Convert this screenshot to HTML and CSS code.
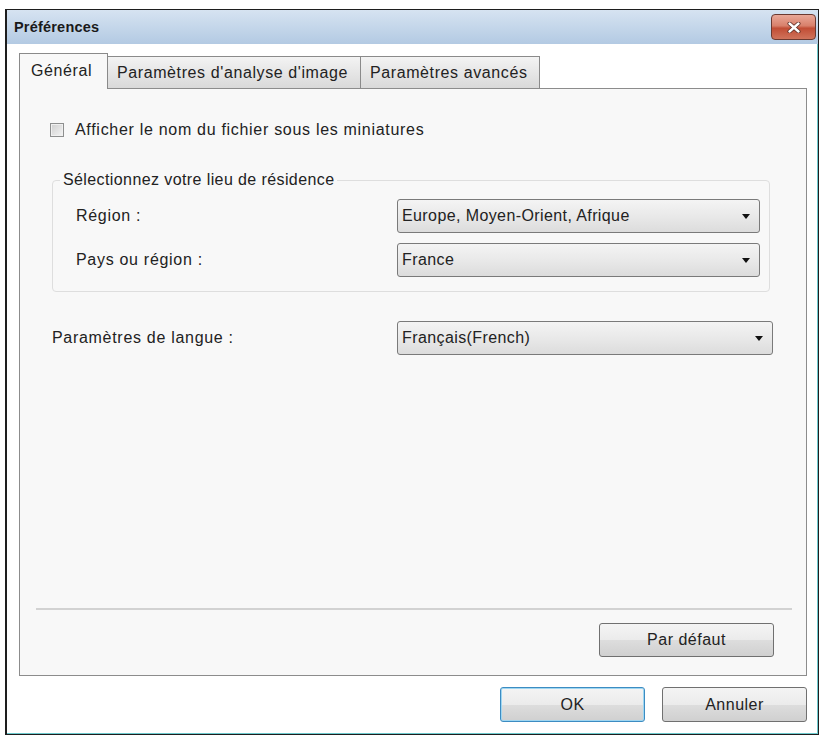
FILE: index.html
```html
<!DOCTYPE html>
<html lang="fr">
<head>
  <meta charset="UTF-8">
  <title>Préférences</title>
  <link rel="stylesheet" href="styles.css">
</head>
<body>
  <div class="window">
    <div class="titlebar">
      <span class="title">Préférences</span>
      <button class="close-btn" title="Fermer">
        <svg width="14" height="11" viewBox="0 0 14 11">
          <path d="M2.5 1.5 L11.5 9.5 M11.5 1.5 L2.5 9.5" stroke="#5a2a22" stroke-width="4" stroke-linecap="round"/>
          <path d="M2.5 1.5 L11.5 9.5 M11.5 1.5 L2.5 9.5" stroke="#fff" stroke-width="2.4" stroke-linecap="round"/>
        </svg>
      </button>
    </div>

    <div class="content">
      <div class="tabs">
        <div class="tab active">Général</div>
        <div class="tab tab-analyse">Paramètres d'analyse d'image</div>
        <div class="tab tab-avances">Paramètres avancés</div>
      </div>

      <div class="panel">
        <div class="panel-body">
          <label class="check-row">
            <span class="checkbox"></span>
            <span>Afficher le nom du fichier sous les miniatures</span>
          </label>

          <fieldset class="group">
            <legend>Sélectionnez votre lieu de résidence</legend>
            <div class="row">
              <span class="label">Région :</span>
              <div class="select">Europe, Moyen-Orient, Afrique<span class="arrow"></span></div>
            </div>
            <div class="row">
              <span class="label">Pays ou région :</span>
              <div class="select">France<span class="arrow"></span></div>
            </div>
          </fieldset>

          <div class="row lang-row">
            <span class="label">Paramètres de langue :</span>
            <div class="select wide">Français(French)<span class="arrow"></span></div>
          </div>
        </div>

        <div class="panel-foot">
          <div class="sep"></div>
          <div class="foot-buttons">
            <button class="btn btn-default">Par défaut</button>
          </div>
        </div>
      </div>

      <div class="dialog-buttons">
        <button class="btn btn-ok">OK</button>
        <button class="btn">Annuler</button>
      </div>
    </div>
  </div>
</body>
</html>
```

FILE: styles.css
```css
body {
  margin: 0;
  padding: 9px 0 0 5px;
  background-color: #fff;
  font-family: "Liberation Sans", Arial, sans-serif;
  font-size: 16px;
  letter-spacing: 0.7px;
  color: #222;
}

.window {
  width: 811px;
  height: 724px;
  border: 1px solid #1e1e1e;
  border-left-width: 2px;
  background-color: #fff;
  box-shadow: inset -1px -1px 0 #6cc9cc;
  display: flex;
  flex-direction: column;
}

.titlebar {
  height: 34px;
  display: flex;
  align-items: center;
  justify-content: space-between;
  padding: 0 2px 0 7px;
  background: linear-gradient(to bottom, #d6e3f1, #b3cae3);
}

.title {
  font-size: 14.5px;
  font-weight: bold;
  letter-spacing: 0.2px;
  color: #1a1a1a;
}

.close-btn {
  width: 45px;
  height: 26px;
  padding: 0;
  border: 1px solid #6b3a31;
  border-radius: 4px;
  background: linear-gradient(to bottom, #e9a898 0%, #d8806b 45%, #c14d35 55%, #d0735b 100%);
  display: flex;
  justify-content: center;
  align-items: center;
}

.content {
  flex: 1;
  padding: 9px 11px 0 12px;
  display: flex;
  flex-direction: column;
}

.tabs {
  display: flex;
  align-items: flex-end;
  height: 35px;
}

.tab {
  height: 32px;
  box-sizing: border-box;
  border: 1px solid #8a8a8a;
  border-bottom: none;
  background: linear-gradient(to bottom, #f3f3f3, #d9d9d9);
  display: flex;
  align-items: center;
  padding-left: 9px;
  margin-left: -1px;
  letter-spacing: 0.6px;
}

.tab.active {
  position: relative;
  z-index: 1;
  height: 36px;
  margin-bottom: -1px;
  margin-left: 0;
  width: 89px;
  padding-left: 11px;
  padding-bottom: 2px;
  background: #f8f8f8;
}

.tab-analyse {
  width: 254px;
}

.tab-avances {
  width: 180px;
}

.panel {
  height: 586px;
  border: 1px solid #8c8c8c;
  background-color: #f8f8f8;
  display: flex;
  flex-direction: column;
}

.panel-body {
  padding: 34px 33px 0 30px;
  display: flex;
  flex-direction: column;
}

.check-row {
  display: flex;
  align-items: center;
  gap: 11px;
  height: 14px;
}

.checkbox {
  width: 12px;
  height: 12px;
  border: 1px solid #8e8f8f;
  background: linear-gradient(135deg, #cfcfcf, #f4f4f4);
  box-shadow: inset 0 0 0 1px #f0f0f0;
}

.group {
  margin: 34px 3px 0 2px;
  padding: 10px 9px 14px 23px;
  border: 1px solid #dedede;
  border-radius: 4px;
}

.group legend {
  margin-left: -16px;
  padding: 0 3px;
  line-height: 18px;
  letter-spacing: 0.4px;
}

.row {
  display: flex;
  align-items: center;
  justify-content: space-between;
}

.row + .row {
  margin-top: 10px;
}

.lang-row {
  margin: 29px 0 0 2px;
}

.select {
  width: 363px;
  height: 34px;
  box-sizing: border-box;
  border: 1px solid #7a7a7a;
  border-radius: 3px;
  background: linear-gradient(to bottom, #f4f4f4, #e9e9e9 50%, #dcdcdc);
  display: flex;
  align-items: center;
  justify-content: space-between;
  padding: 0 9px 0 4px;
  letter-spacing: 0.4px;
}

.select.wide {
  width: 376px;
}

.arrow {
  width: 0;
  height: 0;
  border-left: 4px solid transparent;
  border-right: 4px solid transparent;
  border-top: 5px solid #111;
}

.panel-foot {
  margin-top: auto;
  padding: 0 14px 18px 16px;
}

.sep {
  height: 2px;
  background-color: #d2d2d2;
}

.foot-buttons {
  display: flex;
  justify-content: flex-end;
  margin-top: 13px;
  padding-right: 18px;
}

.btn {
  width: 145px;
  height: 35px;
  border: 1px solid #707070;
  border-radius: 3px;
  background: linear-gradient(to bottom, #f4f4f4, #ebebeb 50%, #dddddd 51%, #d0d0d0);
  font-family: inherit;
  font-size: 16px;
  letter-spacing: 0.5px;
  color: #222;
  padding: 0;
}

.btn-default {
  width: 175px;
  height: 34px;
}

.btn-ok {
  border-color: #3c8cc2;
  box-shadow: inset 0 0 0 1px #9fd6f1;
}

.dialog-buttons {
  display: flex;
  justify-content: flex-end;
  gap: 17px;
  margin-top: 11px;
}
```
